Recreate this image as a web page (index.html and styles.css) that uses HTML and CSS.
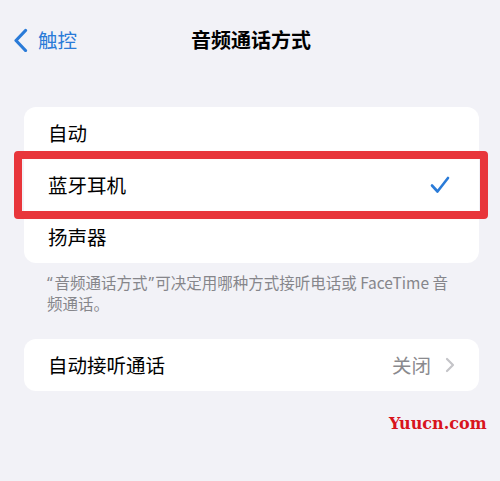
FILE: index.html
```html
<!DOCTYPE html>
<html lang="zh">
<head>
<meta charset="utf-8">
<link rel="stylesheet" href="styles.css">
</head>
<body>
<div class="screen">
  <header class="nav">
    <div class="back">
      <svg class="back-icon" width="16" height="24" viewBox="0 0 16 24"><polyline points="12.5,2.5 3,12.5 12.5,22.5" fill="none" stroke="#2a7bd8" stroke-width="3.2" stroke-linecap="round" stroke-linejoin="round"/></svg>
      <span class="back-label">触控</span>
    </div>
    <h1 class="title">音频通话方式</h1>
  </header>

  <section class="card">
    <div class="row"><span class="label">自动</span></div>
    <div class="row row-selected"><span class="label">蓝牙耳机</span>
      <svg class="check" width="20" height="18" viewBox="0 0 20 18"><polyline points="2,9.5 7.5,15.5 18,2" fill="none" stroke="#2a7bd8" stroke-width="2.6" stroke-linecap="round" stroke-linejoin="round"/></svg>
    </div>
    <div class="row"><span class="label">扬声器</span></div>
  </section>
  <p class="footer"><span class="q q-open">“</span>音频通话方式<span class="q q-close">”</span>可决定用哪种方式接听电话或 FaceTime 音<br>频通话。</p>

  <section class="card card-2">
    <div class="row"><span class="label">自动接听通话</span>
      <span class="value">关闭</span>
      <svg class="chev" width="10" height="16" viewBox="0 0 10 16"><polyline points="2,2 8,8 2,14" fill="none" stroke="#c4c4c8" stroke-width="2.2" stroke-linecap="round" stroke-linejoin="round"/></svg>
    </div>
  </section>

  <div class="watermark">Yuucn.com</div>
</div>
</body>
</html>
```
FILE: styles.css
```css
* { box-sizing: border-box; }
html, body { margin: 0; padding: 0; }
body {
  background: #f2f2f7;
  font-family: "Noto Sans CJK SC", "Noto Sans", sans-serif;
  color: #000;
}
.screen {
  position: relative;
  width: 500px;
  height: 481px;
  overflow: hidden;
  padding: 0 21px 0 24px;
}
.nav {
  position: relative;
  height: 80px;
  display: flex;
  align-items: center;
  justify-content: center;
  margin: 0 -21px 0 -24px;
}
.back {
  position: absolute;
  left: 13px;
  top: 28px;
  display: flex;
  align-items: center;
  gap: 9px;
}
.back-icon { display: block; }
.back-label {
  color: #2a7bd8;
  font-size: 19.5px;
  line-height: 24px;
}
.title {
  margin: 0 0 0 2px;
  font-size: 20px;
  font-weight: 700;
  line-height: 24px;
}
.card {
  margin-top: 27px;
  background: #fff;
  border-radius: 12px;
}
.row {
  position: relative;
  height: 52px;
  display: flex;
  align-items: center;
  padding: 0 24px 0 24px;
}
.label {
  font-size: 19.5px;
  line-height: 24px;
  flex: 1;
}
.row-selected::after {
  content: "";
  position: absolute;
  left: -10px;
  right: -9px;
  top: -8px;
  bottom: -8px;
  border: 8px solid #e8363b;
  border-radius: 4px;
  pointer-events: none;
}
.check { display: block; margin-right: 5px; }
.footer {
  margin: 9px 0 0 23px;
  font-size: 15.5px;
  line-height: 20px;
  color: #86868b;
}
.q { font-family: "Noto Sans", sans-serif; }
.q-open { margin-right: 2px; }
.q-close { margin-left: 1px; margin-right: 1px; }
.card-2 { margin-top: 26px; }
.value {
  font-size: 19.5px;
  line-height: 24px;
  color: #8a8a8e;
  margin-right: 14px;
}
.chev { display: block; }
.watermark {
  position: absolute;
  left: 389px;
  top: 414px;
  font-family: "DejaVu Serif", "Liberation Serif", serif;
  font-weight: 700;
  font-size: 16px;
  line-height: 20px;
  color: #d8141c;
}
```
